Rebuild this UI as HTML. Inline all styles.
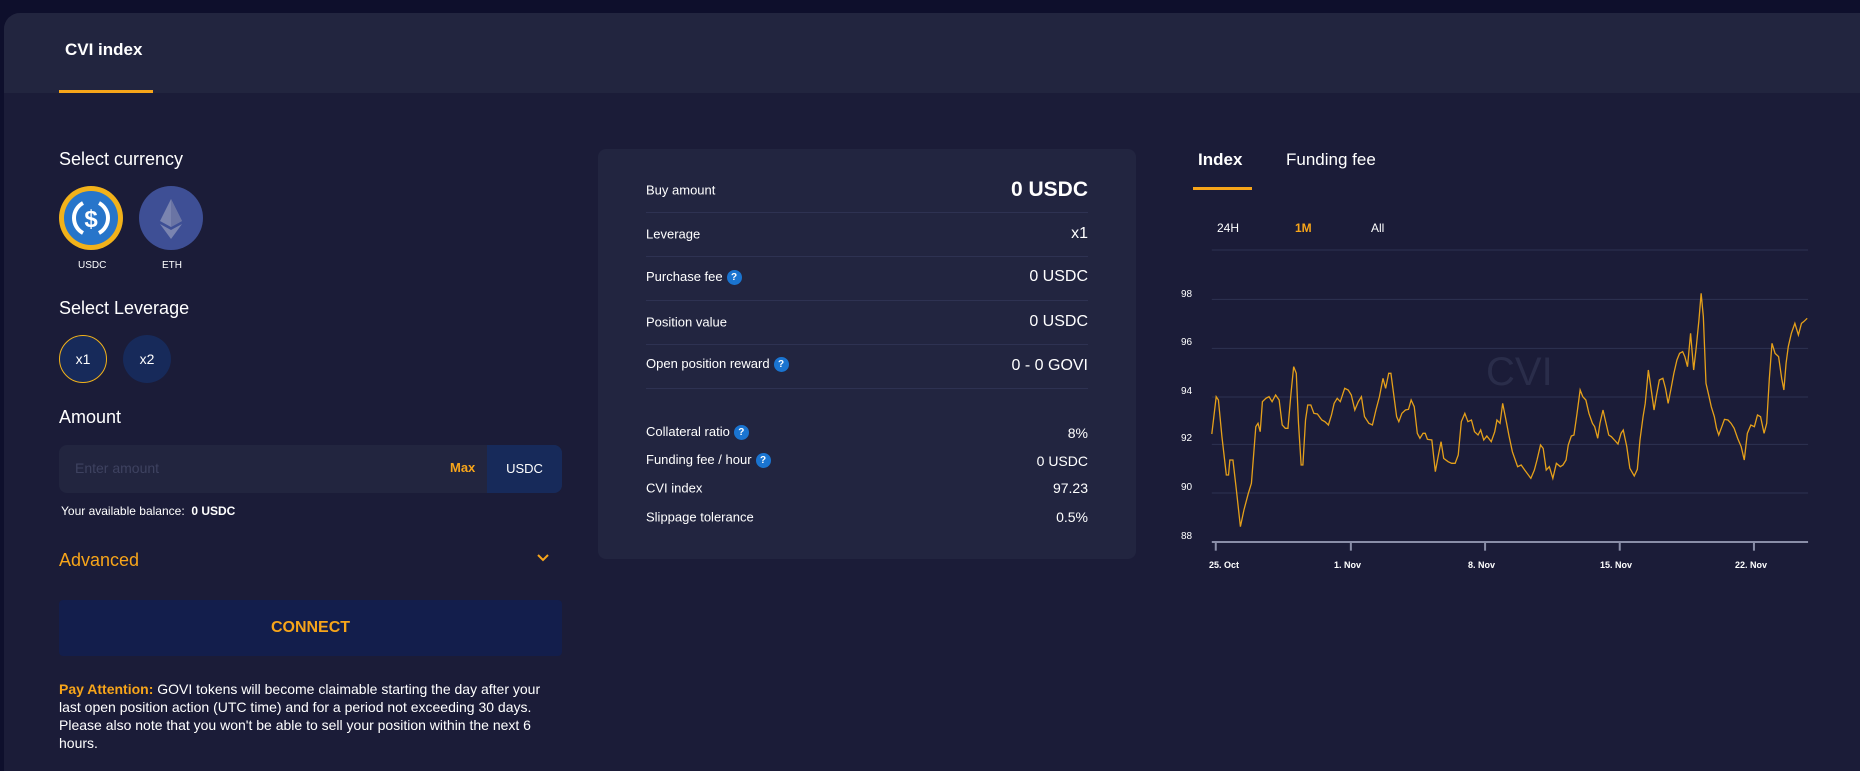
<!DOCTYPE html>
<html><head><meta charset="utf-8"><style>
*{margin:0;padding:0;box-sizing:border-box}
body{width:1860px;height:771px;overflow:hidden;background:#0e0f2c;font-family:"Liberation Sans",sans-serif;color:#fff;position:relative}
.card{position:absolute;left:4px;top:13px;width:1856px;height:758px;background:#1b1c38;border-radius:16px 0 0 0;overflow:hidden}
.hdr{position:absolute;left:0;top:0;width:100%;height:80px;background:#22253f}
.a{position:absolute;white-space:nowrap}
.q{display:inline-block;width:15px;height:15px;border-radius:50%;background:#1a74d0;color:#fff;font-size:10px;font-weight:bold;text-align:center;line-height:15px;vertical-align:middle;margin-left:4px}
.sep{position:absolute;left:646px;width:442px;height:1px;background:#2e3252}
.lbl{position:absolute;left:646px;font-size:13px;transform:translateY(-50%)}
.val{position:absolute;right:772px;font-size:16px;transform:translateY(-50%)}
</style></head><body>
<div class="card"><div class="hdr"></div></div>
<div class="a" style="left:65px;top:40px;font-size:17px;font-weight:bold">CVI index</div>
<div style="position:absolute;left:59px;top:90px;width:94px;height:3px;background:#f7a51a"></div>

<div class="a" style="left:59px;top:149px;font-size:18px">Select currency</div>
<div style="position:absolute;left:59px;top:186px;width:64px;height:64px;border-radius:50%;background:#f2b21a"></div>
<div style="position:absolute;left:64px;top:191px;width:54px;height:54px;border-radius:50%;background:#2775ca"></div>
<svg style="position:absolute;left:59px;top:186px" width="64" height="64" viewBox="0 0 64 64"><path d="M24 17 A17 17 0 0 0 24 47 M40 17 A17 17 0 0 1 40 47" stroke="#fff" stroke-width="4" fill="none"/><text x="32" y="41" text-anchor="middle" font-size="24" font-weight="bold" fill="#fff" font-family="Liberation Sans">$</text></svg>
<div style="position:absolute;left:139px;top:186px;width:64px;height:64px;border-radius:50%;background:#3e4f95"></div>
<svg style="position:absolute;left:139px;top:186px" width="64" height="64" viewBox="0 0 64 64"><path d="M32 13 L21 35 L32 41 L43 35Z" fill="#7a84b0"/><path d="M32 13 L32 41 L43 35Z" fill="#6a74a4"/><path d="M21 38 L32 53 L43 38 L32 44Z" fill="#7a84b0"/></svg>
<div class="a" style="left:78px;top:260px;font-size:10px">USDC</div>
<div class="a" style="left:162px;top:260px;font-size:10px">ETH</div>

<div class="a" style="left:59px;top:298px;font-size:18px">Select Leverage</div>
<div style="position:absolute;left:59px;top:335px;width:48px;height:48px;border-radius:50%;background:#172a5a;border:1px solid #f2b21a;text-align:center;line-height:46px;font-size:14px">x1</div>
<div style="position:absolute;left:123px;top:335px;width:48px;height:48px;border-radius:50%;background:#172a5a;text-align:center;line-height:48px;font-size:14px">x2</div>

<div class="a" style="left:59px;top:407px;font-size:18px">Amount</div>
<div style="position:absolute;left:59px;top:445px;width:503px;height:48px;border-radius:8px;background:#22253f;overflow:hidden">
<div class="a" style="left:16px;top:15px;font-size:14px;color:#3e4260">Enter amount</div>
<div class="a" style="left:391px;top:15px;font-size:13px;color:#f7a51a;font-weight:bold">Max</div>
<div style="position:absolute;right:0;top:0;width:75px;height:48px;background:#172a5a;text-align:center;line-height:48px;font-size:13px">USDC</div></div>
<div class="a" style="left:61px;top:504px;font-size:12px">Your available balance:&nbsp; <b>0 USDC</b></div>
<div class="a" style="left:59px;top:550px;font-size:18px;color:#f7a51a">Advanced</div>
<svg style="position:absolute;left:537px;top:554px" width="12" height="8"><path d="M1 1 L6 6 L11 1" stroke="#f7a51a" stroke-width="2" fill="none"/></svg>
<div style="position:absolute;left:59px;top:600px;width:503px;height:56px;border-radius:4px;background:#131e4c;text-align:center;line-height:56px;font-size:16px;font-weight:bold;color:#f7a51a">CONNECT</div>
<div style="position:absolute;left:59px;top:680px;width:500px;font-size:14px;line-height:18px"><b style="color:#f7a51a">Pay Attention:</b> GOVI tokens will become claimable starting the day after your last open position action (UTC time) and for a period not exceeding 30 days. Please also note that you won't be able to sell your position within the next 6 hours.</div>

<div style="position:absolute;left:598px;top:149px;width:538px;height:410px;border-radius:8px;background:#222540"></div>
<div class="lbl" style="top:190px">Buy amount</div><div class="val" style="top:190px;font-size:21px;font-weight:bold">0 USDC</div>
<div class="sep" style="top:212px"></div>
<div class="lbl" style="top:234px">Leverage</div><div class="val" style="top:234px">x1</div>
<div class="sep" style="top:256px"></div>
<div class="lbl" style="top:277px">Purchase fee<span class="q">?</span></div><div class="val" style="top:277px">0 USDC</div>
<div class="sep" style="top:300px"></div>
<div class="lbl" style="top:322px">Position value</div><div class="val" style="top:322px">0 USDC</div>
<div class="sep" style="top:344px"></div>
<div class="lbl" style="top:364px">Open position reward<span class="q">?</span></div><div class="val" style="top:366px">0 - 0 GOVI</div>
<div class="sep" style="top:388px"></div>
<div class="lbl" style="top:432px">Collateral ratio<span class="q">?</span></div><div class="val" style="top:433px;font-size:14px">8%</div>
<div class="lbl" style="top:460px">Funding fee / hour<span class="q">?</span></div><div class="val" style="top:461px;font-size:14px">0 USDC</div>
<div class="lbl" style="top:488px">CVI index</div><div class="val" style="top:488px;font-size:14px">97.23</div>
<div class="lbl" style="top:517px">Slippage tolerance</div><div class="val" style="top:517px;font-size:14px">0.5%</div>

<div class="a" style="left:1198px;top:150px;font-size:17px;font-weight:bold">Index</div>
<div class="a" style="left:1286px;top:150px;font-size:17px">Funding fee</div>
<div style="position:absolute;left:1193px;top:187px;width:59px;height:3px;background:#f7a51a"></div>
<div class="a" style="left:1217px;top:221px;font-size:12px">24H</div>
<div class="a" style="left:1295px;top:221px;font-size:12px;color:#f7a51a;font-weight:bold">1M</div>
<div class="a" style="left:1371px;top:221px;font-size:12px">All</div>
<div class="a" style="left:1486px;top:350px;font-size:40px;color:#2a2d4a">CVI</div>
<div class="a" style="left:1181px;top:289px;font-size:10px">98</div>
<div class="a" style="left:1181px;top:337px;font-size:10px">96</div>
<div class="a" style="left:1181px;top:386px;font-size:10px">94</div>
<div class="a" style="left:1181px;top:433px;font-size:10px">92</div>
<div class="a" style="left:1181px;top:482px;font-size:10px">90</div>
<div class="a" style="left:1181px;top:531px;font-size:10px">88</div>
<div class="a" style="left:1209px;top:560px;font-size:9px;font-weight:bold">25. Oct</div>
<div class="a" style="left:1334px;top:560px;font-size:9px;font-weight:bold">1. Nov</div>
<div class="a" style="left:1468px;top:560px;font-size:9px;font-weight:bold">8. Nov</div>
<div class="a" style="left:1600px;top:560px;font-size:9px;font-weight:bold">15. Nov</div>
<div class="a" style="left:1735px;top:560px;font-size:9px;font-weight:bold">22. Nov</div>
<svg style="position:absolute;left:1170px;top:130px" width="690" height="450" viewBox="0 0 1568 1350" preserveAspectRatio="none">
<g stroke="#2e3252" stroke-width="1">
<line x1="95" y1="360" x2="1450" y2="360" vector-effect="non-scaling-stroke"/>
<line x1="95" y1="508" x2="1450" y2="508" vector-effect="non-scaling-stroke"/>
<line x1="95" y1="655" x2="1450" y2="655" vector-effect="non-scaling-stroke"/>
<line x1="95" y1="801" x2="1450" y2="801" vector-effect="non-scaling-stroke"/>
<line x1="95" y1="943" x2="1450" y2="943" vector-effect="non-scaling-stroke"/>
<line x1="95" y1="1089" x2="1450" y2="1089" vector-effect="non-scaling-stroke"/>
</g>
<g stroke="#8a8ea8" stroke-width="2">
<line x1="95" y1="1236" x2="1450" y2="1236" vector-effect="non-scaling-stroke"/>
<line x1="104" y1="1236" x2="104" y2="1262" vector-effect="non-scaling-stroke"/>
<line x1="411" y1="1236" x2="411" y2="1262" vector-effect="non-scaling-stroke"/>
<line x1="716" y1="1236" x2="716" y2="1262" vector-effect="non-scaling-stroke"/>
<line x1="1022" y1="1236" x2="1022" y2="1262" vector-effect="non-scaling-stroke"/>
<line x1="1327" y1="1236" x2="1327" y2="1262" vector-effect="non-scaling-stroke"/>
</g>
<polyline fill="none" stroke="#e5a01a" stroke-width="1.3" vector-effect="non-scaling-stroke" points="95,912 105,800 110,810 118,920 128,1035 133,1035 136,990 143,990 150,1070 160,1190 168,1140 178,1090 185,1060 195,890 200,880 205,905 210,815 218,805 225,800 232,815 240,795 248,810 255,885 262,895 268,895 275,790 281,710 287,730 292,880 298,1005 302,1005 308,870 313,825 320,825 327,850 335,852 345,870 352,875 360,885 367,855 373,820 380,805 387,815 397,775 405,780 412,795 420,840 428,815 435,800 442,860 452,880 460,885 468,840 476,800 484,745 490,775 497,730 502,730 508,790 515,860 520,875 527,850 535,840 542,838 548,810 555,830 562,910 568,925 575,910 580,910 585,928 595,930 603,1025 610,975 616,935 622,985 632,995 640,1000 648,1000 655,975 662,875 670,850 677,875 685,870 692,905 700,915 706,900 713,930 720,918 730,935 738,905 743,870 750,880 756,820 765,880 770,915 778,965 790,1010 798,1005 806,1020 820,1045 828,1020 834,990 842,945 848,955 855,1020 862,1010 870,1045 878,1000 887,1010 893,1005 900,990 905,945 912,918 918,915 925,850 932,780 938,800 945,810 952,850 960,880 965,890 972,925 977,880 984,840 990,875 997,915 1003,920 1010,930 1018,942 1025,910 1030,900 1038,950 1045,1015 1055,1038 1062,1018 1068,930 1075,860 1080,820 1087,720 1092,765 1100,840 1105,800 1112,750 1120,745 1126,775 1132,820 1138,780 1145,730 1152,690 1158,670 1165,665 1170,680 1176,710 1183,610 1190,720 1196,650 1202,570 1207,490 1212,560 1218,760 1225,800 1230,830 1237,860 1242,895 1247,915 1254,890 1260,868 1268,870 1275,880 1282,895 1290,925 1298,950 1305,990 1312,910 1320,885 1328,890 1335,855 1342,860 1350,910 1356,880 1362,745 1368,640 1375,670 1383,680 1390,745 1395,780 1400,700 1405,650 1412,610 1420,580 1428,615 1435,580 1440,575 1448,565"/>
</svg>
</body></html>
